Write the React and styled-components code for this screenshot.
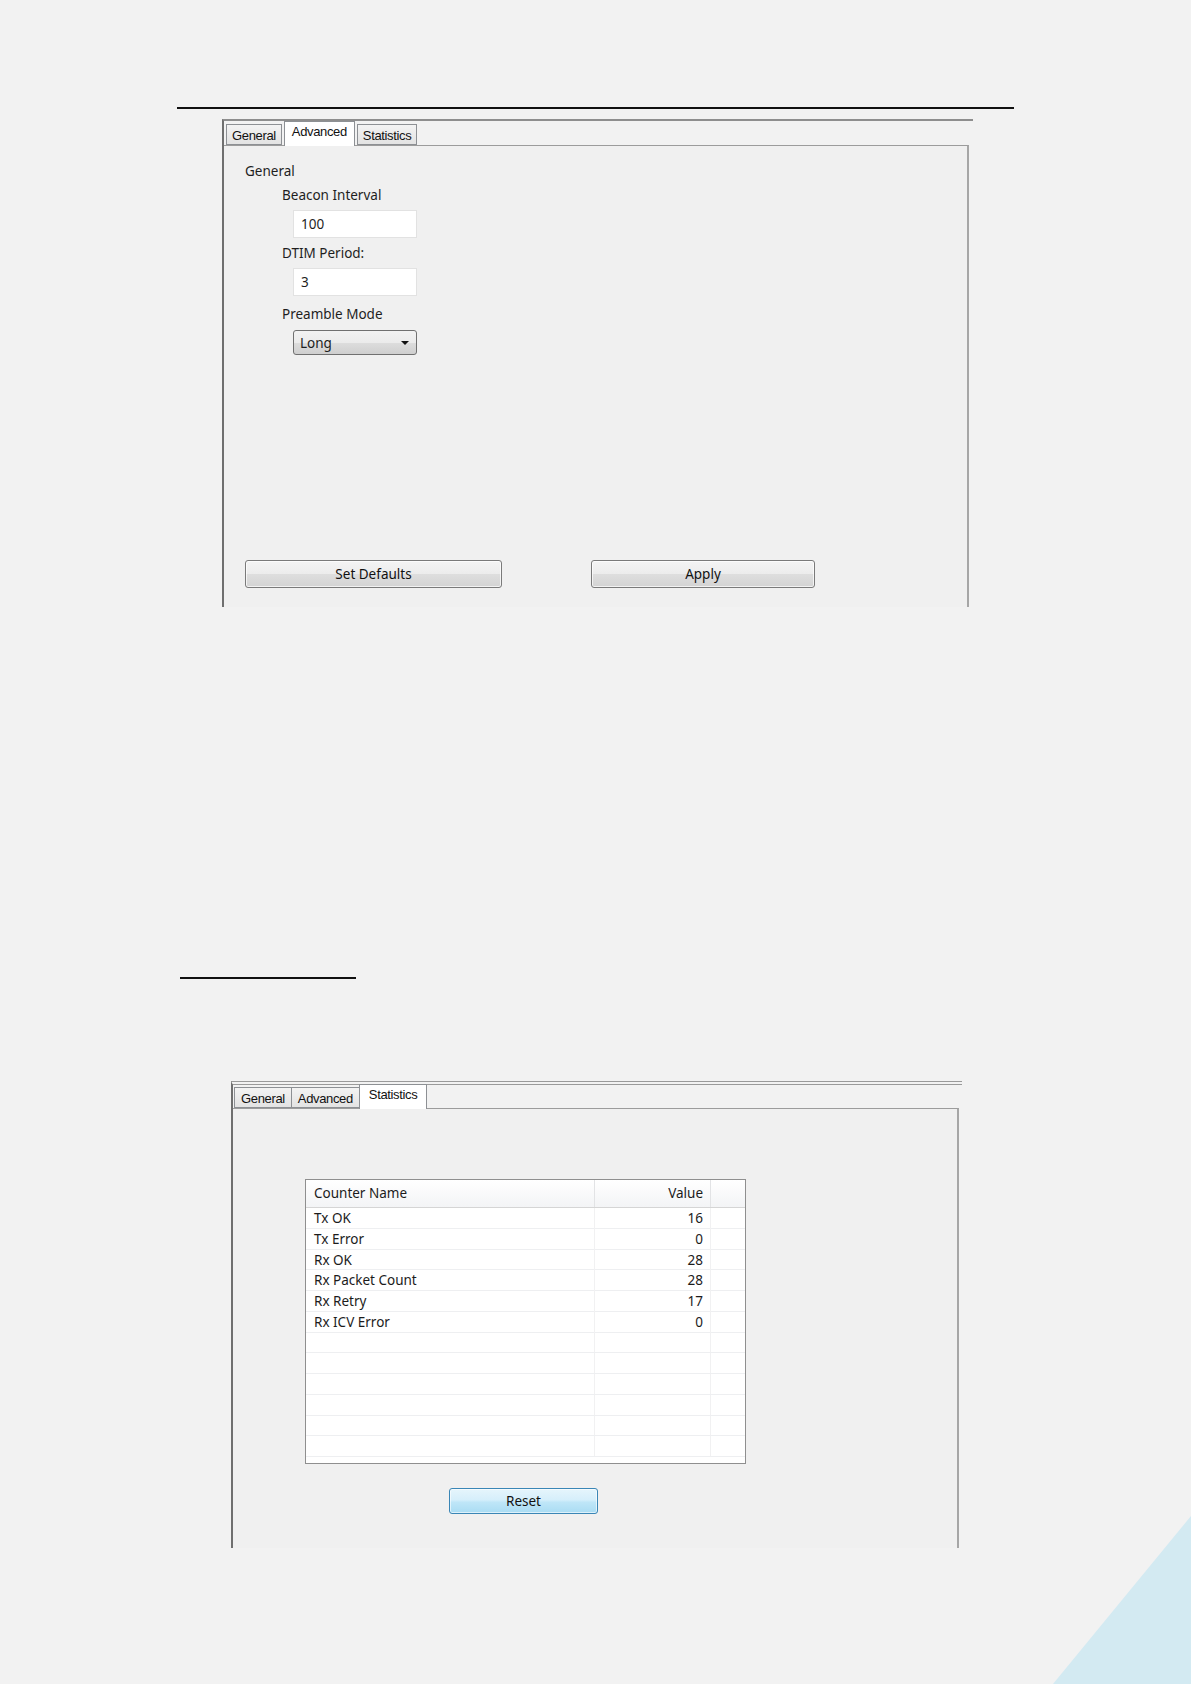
import React from "react";
import styled, { createGlobalStyle, css } from "styled-components";

const Global = createGlobalStyle`
  html, body { margin: 0; padding: 0; background: #f2f2f2; }
  body { font-family: "Noto Sans", "Open Sans", sans-serif; color: #1e1e1e; }
  * { box-sizing: border-box; }
`;

const Page = styled.div`
  position: relative;
  width: 1191px;
  min-height: 1684px;
  overflow: hidden;
  background: #f2f2f2;
  padding-top: 107px;
`;

const Rule = styled.div`
  margin-left: ${(p) => p.$left}px;
  margin-top: ${(p) => p.$top || 0}px;
  width: ${(p) => p.$width}px;
  height: ${(p) => p.$thick || 1}px;
  background: #111;
`;

const Window = styled.div`
  margin-left: ${(p) => p.$left}px;
  margin-top: ${(p) => p.$top}px;
  width: ${(p) => p.$width}px;
  border-left: 2px solid #6f6f6f;
  ${(p) =>
    p.$double
      ? css`border-top: 4px double #9a9a9a;`
      : css`border-top: 2px solid #8e8e8e;`}
`;

const TabStrip = styled.div`
  display: flex;
  align-items: flex-end;
  height: ${(p) => p.$height}px;
  padding-left: ${(p) => p.$pad}px;
  position: relative;
  z-index: 1;
`;

const Tab = styled.div`
  height: ${(p) => (p.$active ? 25 : 21)}px;
  padding: 0 ${(p) => p.$px}px;
  padding-top: ${(p) => (p.$active ? 2 : 3)}px;
  margin-bottom: ${(p) => (p.$active ? -1 : 0)}px;
  border: 1px solid #8d9094;
  border-bottom: ${(p) => (p.$active ? "none" : "1px solid #8d9094")};
  margin-right: ${(p) => (p.$gap ? 2 : -1)}px;
  background: ${(p) =>
    p.$active ? "#ffffff" : "linear-gradient(#f3f3f3, #e3e3e3)"};
  font-family: "Liberation Sans", Arial, sans-serif;
  font-size: 13px;
  letter-spacing: -0.35px;
  line-height: 16px;
  color: #111;
  white-space: nowrap;
`;

const Content = styled.div`
  display: flex;
  flex-direction: column;
  height: ${(p) => p.$height}px;
  margin-right: ${(p) => p.$right}px;
  border-top: 1px solid #9c9c9c;
  border-right: 2px solid #a6a6a6;
  background: #f0f0f0;
  padding: ${(p) => p.$pad};
`;

const SectionLabel = styled.div`
  font-size: 13.5px;
  line-height: 20px;
  height: 20px;
`;

const Group = styled.div`
  display: flex;
  flex-direction: column;
  margin-left: 37px;
`;

const FieldLabel = styled.div`
  font-size: 13.5px;
  line-height: 20px;
  height: 20px;
  margin-top: ${(p) => p.$top}px;
`;

const TextField = styled.div`
  margin: 5px 0 0 11px;
  width: 124px;
  height: 28px;
  background: #fff;
  border: 1px solid #e2e2e2;
  padding-left: 7px;
  font-size: 13.5px;
  line-height: 26px;
`;

const Select = styled.div`
  margin: 6px 0 0 11px;
  width: 124px;
  height: 25px;
  display: flex;
  align-items: center;
  justify-content: space-between;
  padding: 0 7px 0 6px;
  border: 1px solid #707070;
  border-radius: 3px;
  background: linear-gradient(#f2f2f2, #ebebeb 50%, #dddddd 51%, #cfcfcf);
  font-size: 13.5px;
`;

const Caret = styled.span`
  width: 0;
  height: 0;
  border-left: 4px solid transparent;
  border-right: 4px solid transparent;
  border-top: 4px solid #111;
`;

const ButtonRow = styled.div`
  display: flex;
  gap: 89px;
  margin-top: auto;
  padding-bottom: 19px;
`;

const Button = styled.div`
  width: ${(p) => p.$width}px;
  height: ${(p) => p.$height || 28}px;
  display: flex;
  align-items: center;
  justify-content: center;
  border-radius: 3px;
  font-size: 13.5px;
  color: #111;
  ${(p) =>
    p.$blue
      ? css`
          border: 1px solid #3a86b6;
          background: linear-gradient(#e6f5fc, #d6effb 45%, #bfe6f8 55%, #a9dcf3);
          box-shadow: inset 0 0 0 1px rgba(255, 255, 255, 0.6);
        `
      : css`
          border: 1px solid #7a7a7a;
          background: linear-gradient(#f4f4f4, #ececec 50%, #dedede 51%, #d3d3d3);
          box-shadow: inset 0 0 0 1px rgba(255, 255, 255, 0.7);
        `}
`;

const Table = styled.div`
  width: 441px;
  height: 285px;
  border: 1px solid #8f8f8f;
  background: #fff;
  overflow: hidden;
`;

const Row = styled.div`
  display: grid;
  grid-template-columns: 289px 116px 1fr;
  height: ${(p) => (p.$head ? 28 : 20.75)}px;
  border-bottom: 1px solid ${(p) => (p.$head ? "#d5d5d5" : "#eeeff1")};
  background: ${(p) => (p.$head ? "linear-gradient(#ffffff, #f3f4f6)" : "#fff")};
  font-size: 13.5px;
  line-height: ${(p) => (p.$head ? 27 : 21)}px;
`;

const Cell = styled.div`
  padding: 0 ${(p) => (p.$right ? "7px" : "8px")};
  text-align: ${(p) => (p.$right ? "right" : "left")};
  border-right: ${(p) => (p.$last ? "none" : `1px solid ${p.$head ? "#e2e3e5" : "#f1f1f2"}`)};
  white-space: nowrap;
  color: #1c1c1c;
`;

const ResetWrap = styled.div`
  margin: 24px 0 0 144px;
`;

const Corner = styled.svg`
  position: absolute;
  right: 0;
  bottom: 0;
`;

const rows = [
  ["Tx OK", "16"],
  ["Tx Error", "0"],
  ["Rx OK", "28"],
  ["Rx Packet Count", "28"],
  ["Rx Retry", "17"],
  ["Rx ICV Error", "0"],
  ["", ""],
  ["", ""],
  ["", ""],
  ["", ""],
  ["", ""],
  ["", ""],
];

export default function App() {
  return (
    <Page>
      <Global />
      <Rule $left={177} $width={837} $thick={2} />

      <Window $left={222} $top={10} $width={751}>
        <TabStrip $height={24} $pad={2}>
          <Tab $px={5} $gap>General</Tab>
          <Tab $px={7} $active $gap>Advanced</Tab>
          <Tab $px={5}>Statistics</Tab>
        </TabStrip>
        <Content $height={462} $right={4} $pad="15px 0 0 21px">
          <SectionLabel>General</SectionLabel>
          <Group>
            <FieldLabel $top={4}>Beacon Interval</FieldLabel>
            <TextField>100</TextField>
            <FieldLabel $top={5}>DTIM Period:</FieldLabel>
            <TextField>3</TextField>
            <FieldLabel $top={8}>Preamble Mode</FieldLabel>
            <Select>
              <span>Long</span>
              <Caret />
            </Select>
          </Group>
          <ButtonRow>
            <Button $width={257}>Set Defaults</Button>
            <Button $width={224}>Apply</Button>
          </ButtonRow>
        </Content>
      </Window>

      <Rule $left={180} $top={370} $width={176} $thick={2} />

      <Window $left={231} $top={102} $width={731} $double>
        <TabStrip $height={23} $pad={1}>
          <Tab $px={6}>General</Tab>
          <Tab $px={6}>Advanced</Tab>
          <Tab $px={9} $active>Statistics</Tab>
        </TabStrip>
        <Content $height={440} $right={3} $pad="70px 0 0 72px">
          <Table>
            <Row $head>
              <Cell $head>Counter Name</Cell>
              <Cell $head $right>Value</Cell>
              <Cell $head $last />
            </Row>
            {rows.map(([name, value], i) => (
              <Row key={i}>
                <Cell>{name}</Cell>
                <Cell $right>{value}</Cell>
                <Cell $last />
              </Row>
            ))}
          </Table>
          <ResetWrap>
            <Button $blue $width={149} $height={26}>Reset</Button>
          </ResetWrap>
        </Content>
      </Window>

      <Corner width="138" height="168" viewBox="0 0 138 168">
        <polygon points="138,0 138,168 0,168" fill="#d3eaf2" />
      </Corner>
    </Page>
  );
}
